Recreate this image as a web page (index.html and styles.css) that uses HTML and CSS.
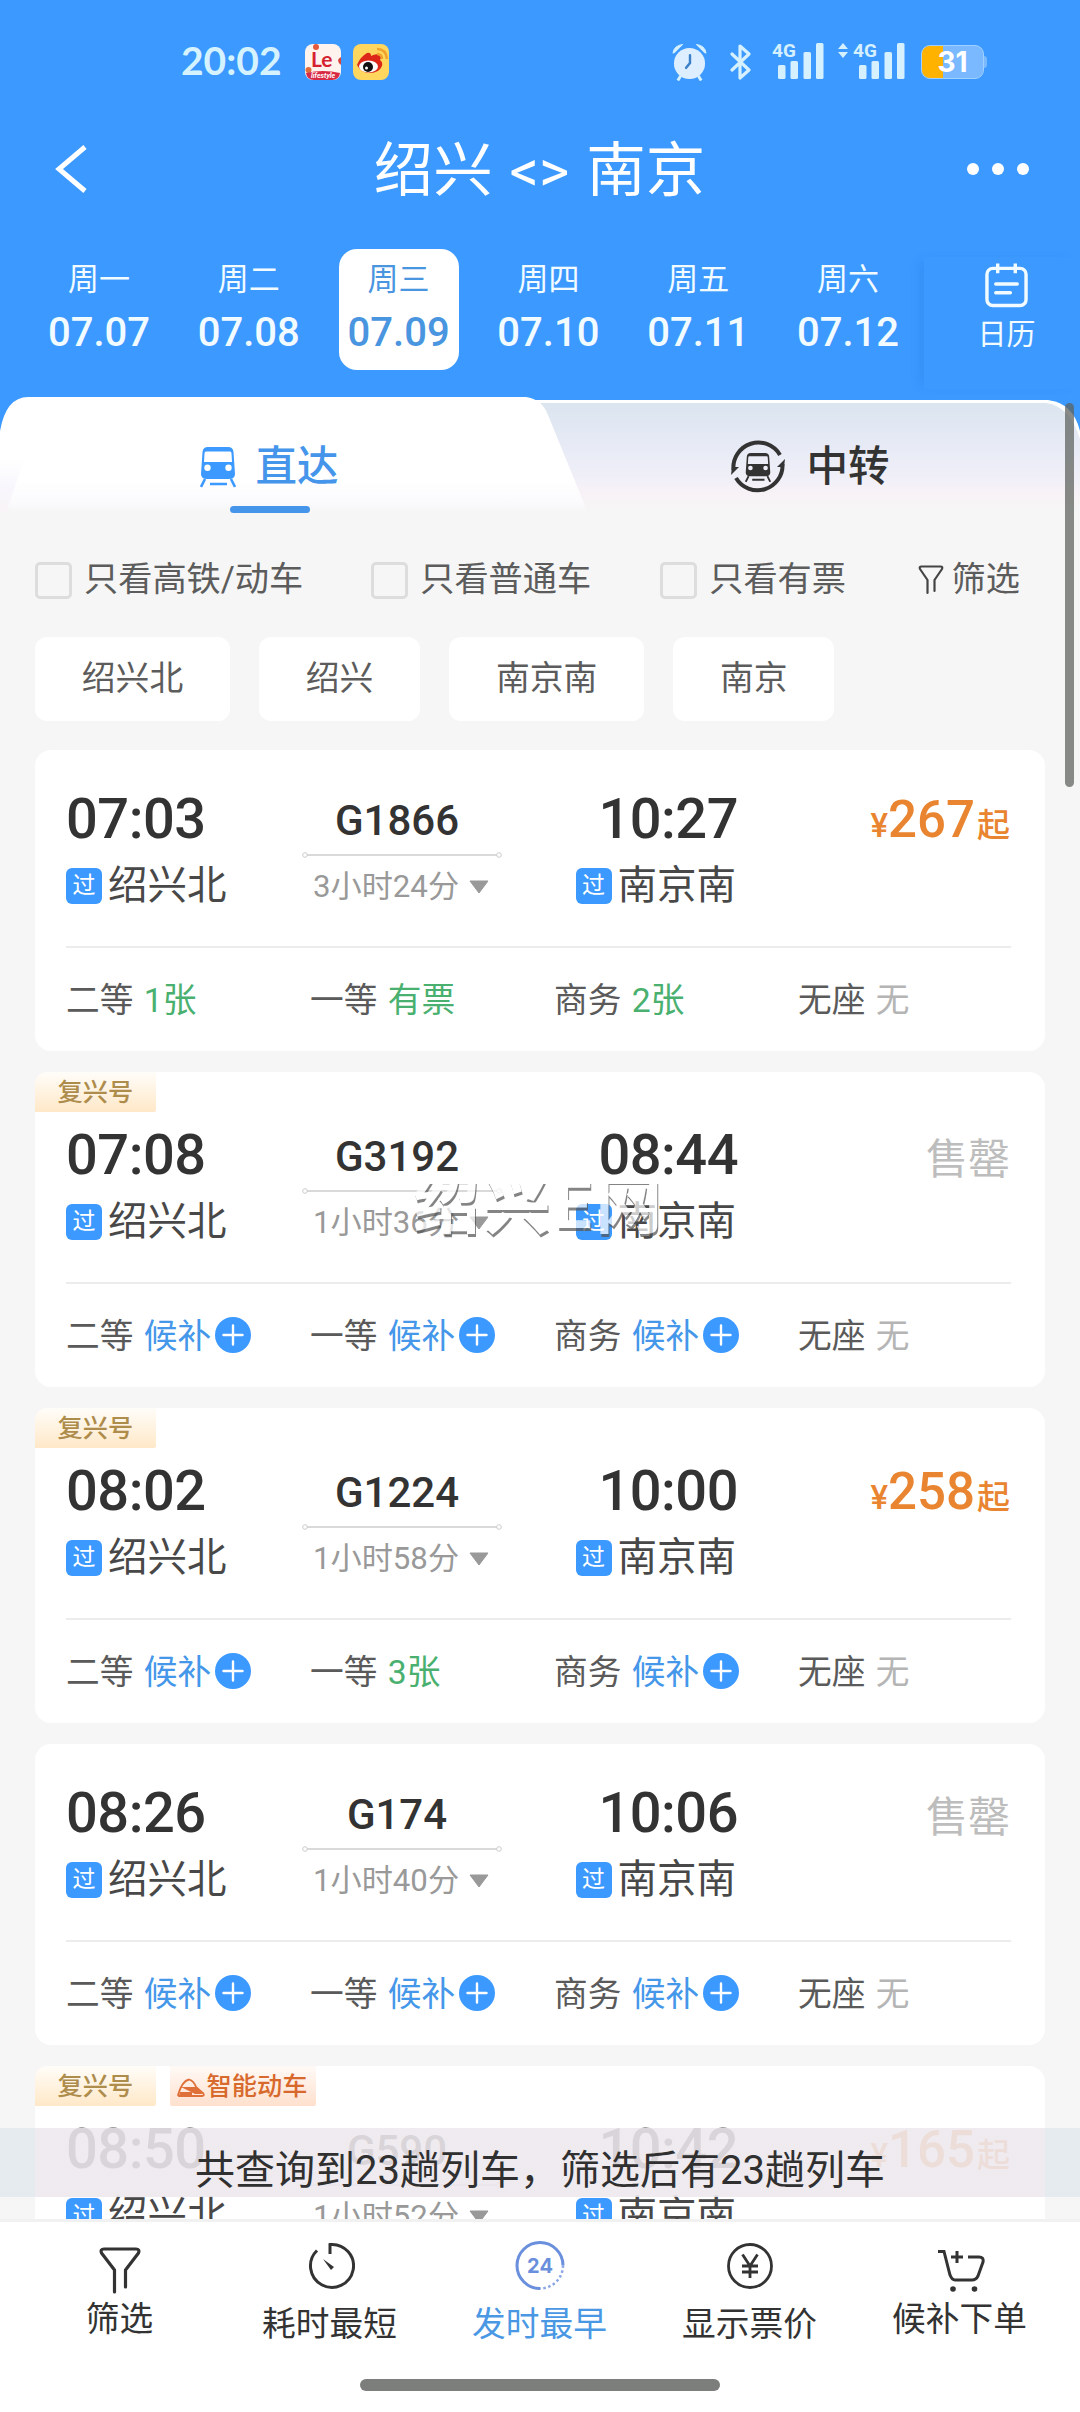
FILE: index.html
```html
<!DOCTYPE html>
<html lang="zh-CN">
<head>
<meta charset="utf-8">
<title>绍兴 - 南京 车票查询</title>
<link rel="stylesheet" href="styles.css">
</head>
<body>
<svg class="defs" width="0" height="0" aria-hidden="true">
  <symbol id="plus" viewBox="0 0 36 36"><circle cx="18" cy="18" r="18" fill="#3b99ff"/><path d="M18 8.5v19M8.5 18h19" stroke="#fff" stroke-width="2.4" stroke-linecap="round"/></symbol>
  <symbol id="track" viewBox="0 0 200 8"><path d="M5 4h190" stroke="#ccc" stroke-width="1.5"/><circle cx="3" cy="4" r="2.3" fill="#fff" stroke="#ccc"/><circle cx="197" cy="4" r="2.3" fill="#fff" stroke="#ccc"/></symbol>
  <symbol id="caret" viewBox="0 0 20 14"><path d="M1 1h18l-9 12z" fill="#999" stroke="#999" stroke-linejoin="round"/></symbol>
  <symbol id="train" viewBox="0 0 36 42"><path fill="currentColor" fill-rule="evenodd" d="M8 1h20q5 0 5.500 5L35 28q0 5-6 5H7q-6 0-6-5L2.500 6Q3 1 8 1zM6 5.500q-1.500 0-1.500 2L4 16h28l-.5-8.500q0-2-1.500-2zM7.500 18.500a3.200 3.200 0 1 0 0 6.400a3.200 3.200 0 1 0 0-6.400zM28.500 18.500a3.200 3.200 0 1 0 0 6.400a3.200 3.200 0 1 0 0-6.400z"/><path d="M5 33l-4 8M31 33l4 8M10 38h17" fill="none" stroke="currentColor" stroke-width="2.600"/></symbol>
  <symbol id="bars" viewBox="0 0 46 36"><g fill="#d5f0ff"><rect x="0" y="22" width="7.500" height="14" rx="1.500"/><rect x="12.500" y="18" width="7.500" height="18" rx="1.500"/><rect x="25.500" y="9" width="7.500" height="27" rx="1.500"/><rect x="38" y="0" width="7.500" height="36" rx="1.500"/></g></symbol>
</svg>

<header class="header">
  <div class="status">
    <span class="clock">20:02</span>
    <svg class="app app-le" viewBox="0 0 36 36"><rect width="36" height="36" rx="8" fill="#fff3ee"/><circle cx="11" cy="3" r="3" fill="#e45a3c"/><circle cx="3.500" cy="26" r="3" fill="#e26b3a"/><path d="M36 13q-6 3 0 8z" fill="#d8433c"/><path d="M1 29q17-4 34 0q-1 7-8 7H9q-7 0-8-7z" fill="#d82a45"/><text x="6" y="23" class="le-text">Le</text><text x="6" y="34" class="le-sub">lifestyle</text></svg>
    <svg class="app" viewBox="0 0 36 36"><rect width="36" height="36" rx="8" fill="#ffd75e"/><path d="M4 21q3-8 10-12q4-1 4 3q5-3 9-1q2 2 0 5q3 2 2 6q-3 7-12 7T4 21z" fill="#dc2719"/><ellipse cx="15.500" cy="22.500" rx="9.500" ry="6" fill="#fff"/><circle cx="15" cy="23" r="5" fill="#111"/><circle cx="13.500" cy="24" r="1.500" fill="#fff"/><path d="M24 10q5 0 5 5M24 5q9 0 10 10" fill="none" stroke="#f0a22e" stroke-width="2.500"/></svg>
    <span class="spacer"></span>
    <svg class="alarm" viewBox="0 0 38 38"><circle cx="19" cy="20.500" r="16" fill="#dceeff"/><path d="M2 10q1-8 10-9l-9 9M36 10q-1-8-10-9l9 9" fill="#d5f0ff" stroke="#d5f0ff" stroke-linejoin="round"/><path d="M10 33l-3 5M28 33l3 5" stroke="#d5f0ff" stroke-width="3"/><path d="M19.500 12v8l-4 5" fill="none" stroke="#3b80c8" stroke-width="2.500" stroke-linecap="round"/></svg>
    <svg class="bt" viewBox="0 0 22 38"><path d="M2 11l17 16-9 8V3l9 8L2 27" fill="none" stroke="#d5f0ff" stroke-width="3.200" stroke-linejoin="round" stroke-linecap="round"/></svg>
    <span class="signal"><b>4G</b><svg><use href="#bars"/></svg></span>
    <span class="signal second"><svg class="updown" viewBox="0 0 10 16"><path d="M0 6l5-6 5 6zM0 9h10l-5 6z" fill="#d5f0ff"/></svg><b>4G</b><svg><use href="#bars"/></svg></span>
    <span class="battery">31</span>
  </div>
  <div class="titlebar">
    <svg class="back" viewBox="0 0 34 48"><path d="M30 2L4 24l26 22" fill="none" stroke="#fff" stroke-width="5"/></svg>
    <h1>绍兴 <span>&lt;&gt;</span> 南京</h1>
    <span class="dots"><i></i><i></i><i></i></span>
  </div>
  <nav class="dates">
    <div class="date"><span>周一</span><b>07.07</b></div>
    <div class="date"><span>周二</span><b>07.08</b></div>
    <div class="date active"><span>周三</span><b>07.09</b></div>
    <div class="date"><span>周四</span><b>07.10</b></div>
    <div class="date"><span>周五</span><b>07.11</b></div>
    <div class="date"><span>周六</span><b>07.12</b></div>
    <div class="calendar">
      <svg viewBox="0 0 44 45"><rect x="2" y="5" width="40" height="38" rx="6" fill="none" stroke="#f2fbff" stroke-width="3.500"/><path d="M13 0v10M31 0v10" stroke="#f2fbff" stroke-width="3.500"/><path d="M11 21h22M11 30h15" stroke="#f2fbff" stroke-width="3.500" stroke-linecap="round"/></svg>
      <span>日历</span>
    </div>
  </nav>
</header>

<div class="tabs">
  <svg class="tabs-bg" viewBox="0 0 1080 116" aria-hidden="true">
    <defs>
      <linearGradient id="gr" x1="0" y1="0" x2="0" y2="1"><stop offset="0" stop-color="#dbe5ef"/><stop offset=".35" stop-color="#e6eaf5"/><stop offset=".68" stop-color="#f0eff8"/><stop offset=".82" stop-color="#f8f2f6"/><stop offset="1" stop-color="#f6f6f6"/></linearGradient>
      <linearGradient id="gl" x1="0" y1="0" x2="0" y2="1"><stop offset="0" stop-color="#fff"/><stop offset=".72" stop-color="#fff"/><stop offset=".9" stop-color="#fbfafd"/><stop offset="1" stop-color="#f6f6f6"/></linearGradient>
      <linearGradient id="gc" x1="0" y1="0" x2="0" y2="1"><stop offset="0" stop-color="#fff"/><stop offset=".5" stop-color="#f8f7fd"/><stop offset="1" stop-color="#f8f4f7"/></linearGradient>
    </defs>
    <path d="M500 3H1048Q1073 6 1080 34V116H500z" fill="#fff"/>
    <path d="M500 6H1046Q1070 9 1080 42V116H500z" fill="url(#gr)"/>
    <path d="M0 34Q6 0 28 0H526Q542 2 548 18L588 116H0z" fill="url(#gl)"/>
    <path d="M0 62H24L6 116H0z" fill="url(#gc)"/>
  </svg>
  <div class="tab selected"><svg class="train"><use href="#train"/></svg><span>直达</span></div>
  <div class="tab">
    <svg class="transfer" viewBox="0 0 56 56"><g fill="none" stroke="#333" stroke-width="4"><path d="M3.500 31A25 25 0 0 1 50 16"/><path d="M52.500 25A25 25 0 0 1 6 39"/></g><path d="M1 36l8-8H2zM55 20l-8 8h7z" fill="#333"/><svg x="15" y="13" width="26" height="31" viewBox="0 0 36 42" color="#333"><use href="#train" width="36" height="42"/></svg></svg>
    <span>中转</span></div>
</div>

<main class="content">
  <div class="filters">
    <label><i></i><span>只看高铁/动车</span></label>
    <label><i></i><span>只看普通车</span></label>
    <label><i></i><span>只看有票</span></label>
    <div class="more"><svg viewBox="0 0 26 30"><path d="M9.500 28V15L2 4Q1 1.500 3.500 1.500h19Q25 1.500 24 4l-7.500 11v11" fill="none" stroke="#444" stroke-width="2.200" stroke-linecap="round" stroke-linejoin="round"/></svg><span>筛选</span></div>
  </div>
  <div class="chips"><span>绍兴北</span><span>绍兴</span><span>南京南</span><span>南京</span></div>

  <section class="list">
    <article class="card">
      <div class="main">
        <div class="depart"><div class="time">07:03</div><div class="station"><i>过</i><span>绍兴北</span></div></div>
        <div class="mid"><b>G1866</b><svg class="track"><use href="#track"/></svg><span>3小时24分<svg><use href="#caret"/></svg></span></div>
        <div class="arrive"><div class="time">10:27</div><div class="station"><i>过</i><span>南京南</span></div></div>
        <div class="price"><small>¥</small>267<small>起</small></div>
      </div>
      <div class="seats"><span>二等 <em class="ok">1张</em></span><span>一等 <em class="ok">有票</em></span><span>商务 <em class="ok">2张</em></span><span>无座 <em>无</em></span></div>
    </article>

    <article class="card tagged">
      <div class="tags"><span>复兴号</span></div>
      <div class="main">
        <div class="depart"><div class="time">07:08</div><div class="station"><i>过</i><span>绍兴北</span></div></div>
        <div class="mid"><b>G3192</b><svg class="track"><use href="#track"/></svg><span>1小时36分<svg><use href="#caret"/></svg></span></div>
        <div class="arrive"><div class="time">08:44</div><div class="station"><i>过</i><span>南京南</span></div></div>
        <div class="soldout">售罄</div>
      </div>
      <div class="seats"><span>二等 <em class="wait">候补</em><svg><use href="#plus"/></svg></span><span>一等 <em class="wait">候补</em><svg><use href="#plus"/></svg></span><span>商务 <em class="wait">候补</em><svg><use href="#plus"/></svg></span><span>无座 <em>无</em></span></div>
      <div class="watermark"><span>绍兴E网</span></div>
    </article>

    <article class="card tagged">
      <div class="tags"><span>复兴号</span></div>
      <div class="main">
        <div class="depart"><div class="time">08:02</div><div class="station"><i>过</i><span>绍兴北</span></div></div>
        <div class="mid"><b>G1224</b><svg class="track"><use href="#track"/></svg><span>1小时58分<svg><use href="#caret"/></svg></span></div>
        <div class="arrive"><div class="time">10:00</div><div class="station"><i>过</i><span>南京南</span></div></div>
        <div class="price"><small>¥</small>258<small>起</small></div>
      </div>
      <div class="seats"><span>二等 <em class="wait">候补</em><svg><use href="#plus"/></svg></span><span>一等 <em class="ok">3张</em></span><span>商务 <em class="wait">候补</em><svg><use href="#plus"/></svg></span><span>无座 <em>无</em></span></div>
    </article>

    <article class="card">
      <div class="main">
        <div class="depart"><div class="time">08:26</div><div class="station"><i>过</i><span>绍兴北</span></div></div>
        <div class="mid"><b>G174</b><svg class="track"><use href="#track"/></svg><span>1小时40分<svg><use href="#caret"/></svg></span></div>
        <div class="arrive"><div class="time">10:06</div><div class="station"><i>过</i><span>南京南</span></div></div>
        <div class="soldout">售罄</div>
      </div>
      <div class="seats"><span>二等 <em class="wait">候补</em><svg><use href="#plus"/></svg></span><span>一等 <em class="wait">候补</em><svg><use href="#plus"/></svg></span><span>商务 <em class="wait">候补</em><svg><use href="#plus"/></svg></span><span>无座 <em>无</em></span></div>
    </article>

    <article class="card tagged">
      <div class="tags"><span>复兴号</span><span class="smart"><svg viewBox="0 0 28 24"><path d="M1 20Q5 6 12 4.500Q17 6 19 12L26 18Q28 21 25 21H2z" fill="none" stroke="#e0703a" stroke-width="1.800"/><path d="M4 12h15l7 7H18zM3 17h12v4H2z" fill="#e0703a"/></svg>智能动车</span></div>
      <div class="main">
        <div class="depart"><div class="time">08:50</div><div class="station"><i>过</i><span>绍兴北</span></div></div>
        <div class="mid"><b>G590</b><svg class="track"><use href="#track"/></svg><span>1小时52分<svg><use href="#caret"/></svg></span></div>
        <div class="arrive"><div class="time">10:42</div><div class="station"><i>过</i><span>南京南</span></div></div>
        <div class="price"><small>¥</small>165<small>起</small></div>
      </div>
    </article>
  </section>
</main>

<footer class="bottom">
  <div class="actions">
    <div class="action high"><svg viewBox="0 0 50 50"><path d="M19.500 48V26L6.500 9Q5 5 9 5H41Q45 5 43.500 9L30.500 26V43" fill="none" stroke="#333" stroke-width="3.200" stroke-linecap="round" stroke-linejoin="round"/></svg><span>筛选</span></div>
    <div class="action"><svg viewBox="0 0 50 50"><path d="M12 9.500A21.500 21.500 0 1 0 25 3.500V13" fill="none" stroke="#333" stroke-width="3"/><path d="M18 18L29 26L26 29z" fill="#333"/></svg><span>耗时最短</span></div>
    <div class="action current"><svg viewBox="0 0 50 50"><path d="M25 47.500A23 23 0 1 1 48 24.500" fill="none" stroke="#6a8fdc" stroke-width="3"/><path d="M48 24.500A23 23 0 0 1 25 47.500" fill="none" stroke="#8aa6e4" stroke-width="2.500" stroke-dasharray="2.500 2.500"/><text x="25" y="32" text-anchor="middle" class="hours">24</text></svg><span>发时最早</span></div>
    <div class="action"><svg viewBox="0 0 50 50"><circle cx="25" cy="25" r="21.500" fill="none" stroke="#333" stroke-width="2.800"/><path d="M17.500 13.500L25 25l7.500-11.500M25 25V37M17 25H33M17 31H33" fill="none" stroke="#333" stroke-width="2.800"/></svg><span>显示票价</span></div>
    <div class="action high"><svg viewBox="0 0 50 50"><path d="M3 7.500H9L15 31Q17 36 20 36H37Q41 36 43 32L48 18Q49 13 44 13H33M16 13H28M22 7V19" fill="none" stroke="#333" stroke-width="3"/><circle cx="18" cy="45" r="2.800" fill="#333"/><circle cx="39.500" cy="45" r="2.800" fill="#333"/></svg><span>候补下单</span></div>
  </div>
  <div class="home"></div>
</footer>
<div class="toast">共查询到23趟列车，筛选后有23趟列车</div>
<div class="scrollbar"></div>
</body>
</html>
```
FILE: styles.css
```css
* { box-sizing: border-box; }
body {
  margin: 0;
  width: 1080px;
  height: 2412px;
  position: relative;
  overflow: hidden;
  display: flex;
  flex-direction: column;
  background: #3b99ff;
  color: #333;
  font-family: Roboto, "Noto Sans CJK SC", sans-serif;
}
i, em { font-style: normal; }
svg { display: block; flex: none; }
.defs { position: absolute; }

/* header */
.header { height: 397px; flex: none; color: #fff; }
.status { height: 120px; padding: 3px 93px 0 181px; display: flex; align-items: center; }
.clock { width: 124px; padding-bottom: 3px; font: 700 39px/44px Lato, sans-serif; color: #d5f2ff; }
.app { width: 36px; height: 36px; margin-right: 12px; }
.le-text { font: 700 21px Lato, sans-serif; fill: #d6222f; }
.le-sub { font: italic 700 7px Roboto, sans-serif; fill: #fff; }
.spacer { flex: 1; }
.alarm { width: 37px; height: 38px; margin-right: 22px; }
.bt { width: 22px; height: 38px; margin-right: 20px; }
.signal { position: relative; width: 52px; height: 37px; display: flex; justify-content: flex-end; }
.signal > svg:last-child { width: 46px; height: 36px; }
.signal b { position: absolute; left: 0; top: -2px; font: 700 19px/20px Roboto, sans-serif; color: #d5f0ff; }
.signal.second { margin-left: 14px; width: 67px; }
.signal.second b { left: 15px; }
.updown { position: absolute; left: 0; top: 0; width: 10px; height: 16px; }
.battery {
  position: relative;
  width: 63px; height: 34px; margin: 0 3px 0 16px;
  border: 1px solid #9fd0ff; border-radius: 9px;
  background: linear-gradient(90deg, #ffb200 21px, #7ab9ff 21px);
  font: 700 28px/32px Inter, sans-serif; text-align: center; color: #fff;
}
.battery::after { content: ""; position: absolute; right: -4px; top: 10px; width: 3px; height: 12px; border-radius: 0 3px 3px 0; background: #7ab9ff; }
.titlebar { height: 98px; padding: 0 51px 0 54px; display: flex; align-items: center; justify-content: space-between; }
.back { width: 36px; height: 48px; margin-right: 22px; }
.titlebar h1 { margin: 0; padding-top: 4px; font-size: 59.500px; font-weight: 400; line-height: 70px; word-spacing: 2px; }
.titlebar h1 span { font-size: 58px; }
.dots { display: flex; gap: 13px; }
.dots i { width: 12px; height: 12px; border-radius: 50%; background: #fff; }
.dates { margin-top: 31px; height: 121px; padding-left: 39px; display: flex; gap: 29.800px; }
.date { width: 120px; height: 121px; padding-top: 12px; border-radius: 18px; text-align: center; color: #f2fbff; }
.date span { display: block; font-size: 31px; line-height: 38px; }
.date b { display: block; margin-top: 11px; font-size: 40px; line-height: 46px; font-weight: 500; }
.date.active { background: #fff; color: #4a95e0; }
.calendar {
  flex: 1; height: 132px; margin-left: -14px; margin-top: 8px; padding: 6px 0 0 9px;
  display: flex; flex-direction: column; align-items: center;
  color: #f2fbff; font-size: 29px; line-height: 34px;
  box-shadow: -8px 0 10px -4px rgba(30, 100, 190, .16);
}
.calendar svg { width: 43px; height: 45px; margin-bottom: 10px; }

/* tabs */
.tabs { position: relative; height: 116px; flex: none; display: flex; }
.tabs-bg { position: absolute; inset: 0; width: 1080px; height: 116px; }
.tab { position: relative; width: 540px; height: 116px; display: flex; align-items: center; justify-content: center; font-size: 41.500px; font-weight: 500; padding-top: 24px; }
.tab span { line-height: 48px; }
.tab.selected { color: #4595ea; padding-right: 1px; }
.selected::after { content: ""; position: absolute; left: 230px; bottom: 0; width: 80px; height: 7px; border-radius: 4px; background: #4595ea; }
.train { width: 36px; height: 42px; margin-right: 19px; color: #3b99ff; }
.transfer { width: 56px; height: 56px; margin-right: 20px; }

/* filters */
.content { height: 1706px; flex: none; overflow: hidden; background: #f6f6f6; padding: 44px 35px 0; }
.filters { height: 46px; display: flex; align-items: center; font-size: 34.200px; line-height: 40px; color: #5c5c5c; }
.filters label { display: flex; align-items: center; }
.filters span { margin-top: -2px; }
.filters label:nth-child(2) { margin-left: 68px; }
.filters label:nth-child(3) { margin-left: 69px; }
.filters i { width: 37px; height: 37px; margin-right: 12px; border: 3px solid #ddd; border-radius: 5px; }
.more { margin-left: auto; margin-right: 25px; display: flex; align-items: center; gap: 8px; }
.more svg { width: 26px; height: 30px; }
.chips { margin-top: 34px; display: flex; gap: 29px; }
.chips span { height: 84px; padding: 0 46.800px; border-radius: 12px; background: #fff; font-size: 33.800px; line-height: 84px; color: #5c5c5c; }

/* train cards */
.list { margin-top: 29px; display: flex; flex-direction: column; gap: 21px; }
.card { position: relative; height: 301px; flex: none; padding: 41px 34px 0 31px; border-radius: 16px; background: #fff; }
.card.tagged { height: 315px; padding-top: 55px; }
.tags { position: absolute; left: 0; top: 0; display: flex; gap: 14px; }
.tags span { height: 40px; padding: 0 22.500px 4px; display: flex; align-items: center; font-size: 25.200px; font-weight: 500; color: #ae8c4c; background: linear-gradient(#fffdf9, #ffe8c8); border-radius: 12px 0 2px 0; }
.tags .smart { padding: 0 9px 4px 7px; gap: 2px; color: #d8692c; background: linear-gradient(#fffaf7, #ffe0cd); border-radius: 0 0 2px 2px; }
.smart svg { width: 28px; height: 24px; margin-top: 6px; }
.main { height: 157px; display: flex; border-bottom: 2px solid #ececec; }
.depart { width: 236px; }
.mid { width: 200px; padding-top: 3px; display: flex; flex-direction: column; align-items: center; }
.arrive { margin-left: 73px; width: 163px; display: flex; flex-direction: column; align-items: flex-end; }
.time { font-size: 56px; font-weight: 500; line-height: 57px; letter-spacing: -.5px; }
.station { height: 36px; margin-top: 20px; display: flex; align-items: center; font-size: 39.500px; line-height: 46px; color: #484848; white-space: nowrap; }
.station span { margin-top: 0; }
.station i { width: 36px; height: 36px; margin-right: 6px; border-radius: 6px; background: #3b99ff; color: #fff; font-size: 23px; line-height: 36px; text-align: center; }
.arrive .station { margin-right: 2px; }
.mid b { margin-right: 10px; font-size: 42px; line-height: 53px; font-weight: 500; }
.track { width: 200px; height: 8px; margin-top: 4px; }
.mid span { margin: 9px 2px 0 0; display: flex; align-items: center; gap: 10px; font-size: 31.200px; line-height: 37px; color: #999; }
.mid span svg { width: 20px; height: 14px; }
.price { margin-left: auto; margin-right: 1px; font-size: 51px; font-weight: 500; line-height: 57px; color: #e98530; }
.price small { font-size: 33px; margin-left: 2px; }
.price small:first-child { margin-left: 0; }
.soldout { margin-left: auto; margin-right: 1px; font-size: 42px; line-height: 65px; color: #bdbdbd; }
.seats { height: 103px; display: flex; font-size: 33.700px; color: #5a5a5a; }
.seats span { width: 244px; height: 99px; display: flex; align-items: center; white-space: pre; }
.seats span:last-child { width: auto; }
.seats em { color: #b5b5b5; margin-left: 2px; }
.seats .ok { color: #49b06f; }
.seats .wait { color: #4597ea; }
.seats svg { width: 36px; height: 36px; margin: 3px 0 0 4px; }
.watermark { position: absolute; left: 378px; top: 112px; width: 290px; height: 66px; overflow: hidden; }
.watermark span { display: block; margin-top: -18px; font-size: 67px; line-height: 78px; font-weight: 700; letter-spacing: 3.500px; color: #fff; text-shadow: 1px 3px 0 #555; opacity: .72; white-space: nowrap; }

/* overlays and bottom bar */
.toast {
  position: absolute; left: 0; top: 2128px; width: 1080px; height: 69px;
  background: linear-gradient(90deg, rgba(227,233,238,.89) 35px, rgba(237,232,237,.89) 35px, rgba(237,232,237,.89) 1045px, rgba(227,233,238,.89) 1045px);
  font-size: 40px; line-height: 85px; text-align: center; color: #303030;
}
.scrollbar { position: absolute; left: 1065px; top: 403px; width: 9px; height: 384px; border-radius: 5px; background: rgba(95, 98, 95, .74); }
.bottom { height: 193px; flex: none; border-top: 3px solid #f1f1f1; background: #fff; }
.actions { height: 157px; padding: 0 15px; display: flex; }
.action { width: 210px; padding-top: 19px; display: flex; flex-direction: column; align-items: center; font-size: 33.700px; line-height: 40px; }
.action svg { width: 50px; height: 50px; }
.action span { margin: 14px 1px 0 0; }
.action.high { padding-top: 22px; }
.action.high span { margin-top: 6px; }
.action.current { color: #4a97e4; }
.hours { font: 700 20px Inter, sans-serif; fill: #6a8fdc; }
.home { width: 360px; height: 12px; margin: 0 auto; border-radius: 6px; background: #7c7e7c; }
```
